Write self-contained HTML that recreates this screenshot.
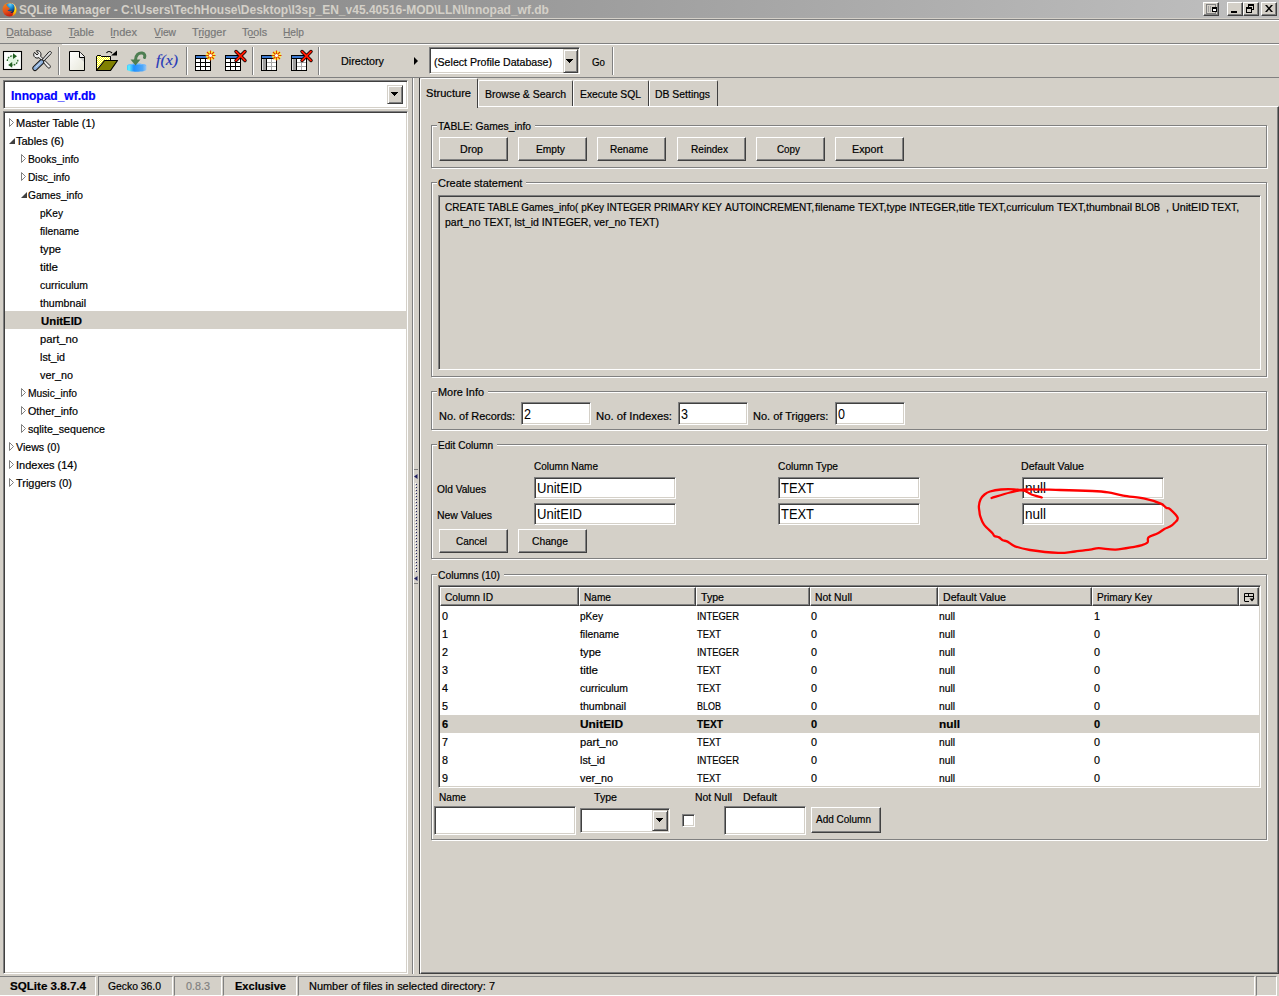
<!DOCTYPE html>
<html><head><meta charset="utf-8">
<style>
*{box-sizing:border-box;margin:0;padding:0}
html,body{width:1279px;height:996px;overflow:hidden;background:#d4d0c8;font-family:"Liberation Sans",sans-serif;font-size:11px;color:#000}
.a{position:absolute}
.t{position:absolute;white-space:pre;line-height:13px;-webkit-text-stroke:0.2px currentColor}
.u{text-decoration:underline}
svg{position:absolute;overflow:visible}
</style></head><body>
<div class="a" style="left:0px;top:0px;width:1279px;height:18px;background:linear-gradient(to right,#808080,#c0c0c0)"></div>
<div class="t" style="left:19px;top:3px;font-weight:bold;font-size:12px;line-height:14px;color:#d4d0c8;-webkit-text-stroke:0;">SQLite Manager - C:\Users\TechHouse\Desktop\I3sp_EN_v45.40516-MOD\LLN\Innopad_wf.db</div>
<svg style="left:1.5px;top:1.5px" width="15" height="15" viewBox="0 0 15 15">
<defs><radialGradient id="glb" cx="0.45" cy="0.1" r="0.9"><stop offset="0" stop-color="#70d8ff"/><stop offset="0.45" stop-color="#1a8ad0"/><stop offset="1" stop-color="#0a1850"/></radialGradient>
<linearGradient id="fox" x1="0" y1="0" x2="0.3" y2="1"><stop offset="0" stop-color="#f49020"/><stop offset="0.7" stop-color="#e04a18"/><stop offset="1" stop-color="#c82010"/></linearGradient>
<linearGradient id="yl" x1="0" y1="0" x2="0" y2="1"><stop offset="0" stop-color="#fff8d0"/><stop offset="0.6" stop-color="#ffd800"/><stop offset="1" stop-color="#f08010"/></linearGradient></defs>
<circle cx="7.5" cy="7.5" r="7" fill="url(#fox)"/>
<path d="M10 1.2 C13.5 2.5 15 6 14.3 9.5 C13.8 12 12 13.5 10 14 C12 11.5 12.5 6 10 1.2Z" fill="url(#yl)"/>
<path d="M4.5 2.2 C6.5 0.8 9.5 0.8 11.3 2.2 C12.8 3.5 13 7 12 9.2 C11 10.8 9.5 11.3 8 11 C9.5 10.2 10 9.8 9.8 9 C8.5 9.5 6.5 9.2 5.5 8.3 C6.8 8 7.6 7.3 7.8 6.3 C6.8 5.8 6.2 5.6 5.8 4.6 C5 4.2 4.6 3.5 4.5 2.2Z" fill="url(#glb)"/>
</svg>
<div class="a" style="left:0px;top:18px;width:1279px;height:1px;background:#d4d0c8"></div>
<div class="a" style="left:0px;top:19px;width:1279px;height:1px;background:#808080"></div>
<div class="a" style="left:0px;top:20px;width:1279px;height:1px;background:#fff"></div>
<div class="a" style="left:1203px;top:2px;width:16px;height:14px;background:#d4d0c8;border-top:1px solid #fff;border-left:1px solid #fff;border-right:1px solid #404040;border-bottom:1px solid #404040;box-shadow:inset -1px -1px 0 #808080"></div>
<div class="a" style="left:1227px;top:2px;width:16px;height:14px;background:#d4d0c8;border-top:1px solid #fff;border-left:1px solid #fff;border-right:1px solid #404040;border-bottom:1px solid #404040;box-shadow:inset -1px -1px 0 #808080"></div>
<div class="a" style="left:1243px;top:2px;width:16px;height:14px;background:#d4d0c8;border-top:1px solid #fff;border-left:1px solid #fff;border-right:1px solid #404040;border-bottom:1px solid #404040;box-shadow:inset -1px -1px 0 #808080"></div>
<div class="a" style="left:1261px;top:2px;width:16px;height:14px;background:#d4d0c8;border-top:1px solid #fff;border-left:1px solid #fff;border-right:1px solid #404040;border-bottom:1px solid #404040;box-shadow:inset -1px -1px 0 #808080"></div>
<div class="a" style="left:1206px;top:4px;width:10px;height:10px;border:1px solid #808080"></div>
<div class="a" style="left:1208px;top:6px;width:1px;height:6px;background:#a0a0a0"></div>
<div class="a" style="left:1210px;top:6px;width:1px;height:6px;background:#a0a0a0"></div>
<div class="a" style="left:1212px;top:7px;width:5px;height:5px;border:1px solid #000;border-top-width:2px;background:#fff"></div>
<div class="a" style="left:1231px;top:11px;width:6px;height:2px;background:#000"></div>
<div class="a" style="left:1248px;top:4px;width:6px;height:6px;border:1px solid #000;border-top-width:2px"></div>
<div class="a" style="left:1246px;top:7px;width:6px;height:6px;border:1px solid #000;border-top-width:2px;background:#d4d0c8"></div>
<svg style="left:1265px;top:5px" width="8" height="7" viewBox="0 0 8 7"><path d="M0 0h2l2 2.5l2-2.5h2l-3 3.5l3 3.5h-2l-2-2.5l-2 2.5h-2l3-3.5z" fill="#000"/></svg>
<div class="t" style="left:6px;top:26px;color:#787878;transform:scaleX(0.9768);transform-origin:0 0;">Database</div>
<div class="t" style="left:68px;top:26px;color:#787878;transform:scaleX(0.9887);transform-origin:0 0;">Table</div>
<div class="t" style="left:110px;top:26px;color:#787878;">Index</div>
<div class="t" style="left:154px;top:26px;color:#787878;transform:scaleX(0.9300);transform-origin:0 0;">View</div>
<div class="t" style="left:192px;top:26px;color:#787878;transform:scaleX(0.9873);transform-origin:0 0;">Trigger</div>
<div class="t" style="left:242px;top:26px;color:#787878;transform:scaleX(0.9732);transform-origin:0 0;">Tools</div>
<div class="t" style="left:283px;top:26px;color:#787878;transform:scaleX(0.9282);transform-origin:0 0;">Help</div>
<div class="a" style="left:7px;top:37px;width:7px;height:1px;background:#787878"></div>
<div class="a" style="left:69px;top:37px;width:6px;height:1px;background:#787878"></div>
<div class="a" style="left:111px;top:37px;width:4px;height:1px;background:#787878"></div>
<div class="a" style="left:155px;top:37px;width:6px;height:1px;background:#787878"></div>
<div class="a" style="left:199px;top:37px;width:4px;height:1px;background:#787878"></div>
<div class="a" style="left:249px;top:37px;width:6px;height:1px;background:#787878"></div>
<div class="a" style="left:284px;top:37px;width:7px;height:1px;background:#787878"></div>
<div class="a" style="left:0px;top:43px;width:1279px;height:1px;background:#808080"></div>
<div class="a" style="left:62px;top:44px;width:1217px;height:1px;background:#fff"></div>
<div class="a" style="left:0px;top:77px;width:1279px;height:1px;background:#808080"></div>
<div class="a" style="left:58px;top:47px;width:1px;height:28px;background:#808080"></div>
<div class="a" style="left:59px;top:47px;width:1px;height:28px;background:#fff"></div>
<div class="a" style="left:186px;top:47px;width:1px;height:28px;background:#808080"></div>
<div class="a" style="left:187px;top:47px;width:1px;height:28px;background:#fff"></div>
<div class="a" style="left:252px;top:47px;width:1px;height:28px;background:#808080"></div>
<div class="a" style="left:253px;top:47px;width:1px;height:28px;background:#fff"></div>
<div class="a" style="left:318px;top:47px;width:1px;height:28px;background:#808080"></div>
<div class="a" style="left:319px;top:47px;width:1px;height:28px;background:#fff"></div>
<div class="a" style="left:612px;top:47px;width:1px;height:28px;background:#808080"></div>
<div class="a" style="left:613px;top:47px;width:1px;height:28px;background:#fff"></div>
<div class="t" style="left:341px;top:55px;transform:scaleX(0.9769);transform-origin:0 0;">Directory</div>
<svg style="left:3px;top:51px" width="19" height="19" viewBox="0 0 19 19">
<rect x="0.5" y="0.5" width="18" height="18" fill="#fbfdfb" stroke="#000" stroke-width="1.1"/>
<ellipse cx="9.5" cy="9.5" rx="4.5" ry="4" fill="#dff5df"/>
<path d="M4.3 10 A5.3 5 0 0 1 10.5 5" fill="none" stroke="#2a6a2a" stroke-width="1.3" stroke-dasharray="1.8 0.9"/>
<path d="M14.8 8.8 A5.3 5 0 0 1 8.5 14" fill="none" stroke="#2a6a2a" stroke-width="1.3" stroke-dasharray="1.8 0.9"/>
<path d="M10 2.3 L14 5.2 L10 8.1 Z" fill="#1f5f1f"/>
<path d="M9.2 11 L5.2 13.9 L9.2 16.8 Z" fill="#1f5f1f"/>
</svg>
<svg style="left:31px;top:49px" width="22" height="23" viewBox="0 0 22 23">
<path d="M3.6 3.2 C2.2 4.8 2.4 7.2 4 8.4 C5.3 9.3 6.8 9.2 8 8.6 L16.8 18.6 C17.6 19.4 18.9 19.2 19.3 18.2 C19.6 17.5 19.2 16.8 18.6 16.2 L9.6 7.2 C10.3 5.7 10.1 3.6 8.6 2.4 C7.6 1.6 6.3 1.4 5.4 1.8 L7.4 4.4 L6 6 L3.8 3.6 Z" fill="#ececec" stroke="#1a1a1a" stroke-width="1"/>
<path d="M20.3 3.2 C19.6 2.2 18.5 2.3 17.8 3 L11 10.8 L12.6 12.3 L19.6 5.1 C20.3 4.5 20.8 3.9 20.3 3.2 Z" fill="#dcdcdc" stroke="#1a1a1a" stroke-width="1"/>
<path d="M4 19.3 L10.5 13" stroke="#1a1a1a" stroke-width="5.4" stroke-linecap="round"/>
<path d="M4 19.3 L10.5 13" stroke="#8cb0dc" stroke-width="3.4" stroke-linecap="round"/>
<path d="M4.6 18.4 L9.6 13.6" stroke="#c8daf0" stroke-width="1"/>
</svg>
<svg style="left:69px;top:51px" width="16" height="20" viewBox="0 0 16 20">
<defs><linearGradient id="gd" x1="0" y1="0" x2="1" y2="1"><stop offset="0" stop-color="#ffffff"/><stop offset="1" stop-color="#e6e6d8"/></linearGradient></defs>
<path d="M0.5 0.5 L10.5 0.5 L15.5 5.5 L15.5 19.5 L0.5 19.5 Z" fill="url(#gd)" stroke="#000" stroke-width="1"/>
<path d="M10.5 0.5 L10.5 6.5 L15.5 6.5" fill="#f0f0f0" stroke="#000" stroke-width="1"/>
<path d="M11 7 L15 7 L15 11 Z" fill="#b8b8b8" opacity="0.6"/>
</svg>
<svg style="left:96px;top:50px" width="23" height="22" viewBox="0 0 23 22">
<defs><pattern id="ck" width="2" height="2" patternUnits="userSpaceOnUse"><rect width="2" height="2" fill="#ffff00"/><rect width="1" height="1" fill="#fff"/><rect x="1" y="1" width="1" height="1" fill="#fff"/></pattern></defs>
<path d="M0.5 20.5 L0.5 6.5 L1.5 5.5 L4.5 5.5 L5.5 6.5 L14.5 6.5 L14.5 10.5" fill="url(#ck)" stroke="#000" stroke-width="1"/>
<path d="M0.5 20.5 L0.5 6.5 L14.5 6.5 L14.5 10.5 L8 10.5 Z" fill="url(#ck)"/>
<path d="M0.5 6.5 L1.5 5.5 L4.5 5.5 L5.5 6.5 L14.5 6.5 L14.5 10.5" fill="none" stroke="#000" stroke-width="1"/>
<path d="M0.5 20.5 L0.5 6.5" stroke="#000" stroke-width="1"/>
<path d="M0.5 20.5 L8.5 10.5 L21.5 10.5 L14.5 20.5 Z" fill="#808000" stroke="#000" stroke-width="1.2" stroke-linejoin="round"/>
<path d="M10.5 3 C12 0.8 14 1.2 16 3" fill="none" stroke="#000" stroke-width="1.2"/>
<path d="M15 5.5 L21 0.5 L21 5.5 Z" fill="#000"/>
</svg>
<svg style="left:126px;top:50px" width="22" height="23" viewBox="0 0 22 23">
<defs><linearGradient id="bd" x1="0" y1="0" x2="1" y2="0"><stop offset="0" stop-color="#30d0ff"/><stop offset="0.1" stop-color="#60f0ff"/><stop offset="0.35" stop-color="#2090ff"/><stop offset="0.8" stop-color="#50a8f8"/><stop offset="1" stop-color="#a0c8f0"/></linearGradient></defs>
<path d="M1 15.5 C1 13 20.5 13 20.5 15.5 L20.5 19.5 C20.5 22.5 1 22.5 1 19.5 Z" fill="url(#bd)"/>
<path d="M1.5 15.5 C3 13.8 18 13.8 20 15.5" fill="none" stroke="#70b8ff" stroke-width="1"/>
<path d="M9.5 10 C9.5 5 13 2.5 16 3 C18.5 3.5 19.5 5.5 18.5 7.5" fill="none" stroke="#4e7e52" stroke-width="3" stroke-linecap="round"/>
<path d="M4.5 9.5 L14.5 9.5 L9.5 15.5 Z" fill="#4e7e52"/>
</svg>
<div class="t" style="left:156px;top:52px;font-family:'Liberation Serif',serif;font-style:italic;font-size:15px;line-height:17px;color:#2336b8;-webkit-text-stroke:0.15px currentColor;transform:scaleX(1.0563);transform-origin:0 0;">f(x)</div>
<svg style="left:195px;top:55px" width="16" height="16" viewBox="0 0 16 16"><rect x="0" y="0" width="16" height="16" fill="#000"/><rect x="1" y="1" width="14" height="2" fill="#3a78d0"/><rect x="1" y="4" width="4" height="3" fill="#fff"/><rect x="6" y="4" width="4" height="3" fill="#fff"/><rect x="11" y="4" width="4" height="3" fill="#fff"/><rect x="1" y="8" width="4" height="3" fill="#fff"/><rect x="6" y="8" width="4" height="3" fill="#fff"/><rect x="11" y="8" width="4" height="3" fill="#fff"/><rect x="1" y="12" width="4" height="3" fill="#fff"/><rect x="6" y="12" width="4" height="3" fill="#fff"/><rect x="11" y="12" width="4" height="3" fill="#fff"/><g transform="translate(15.5,0.5)"><circle r="4.5" fill="#ffff30" opacity="0.9"/><path d="M0 -5 L0 5 M-5 0 L5 0 M-3.5 -3.5 L3.5 3.5 M-3.5 3.5 L3.5 -3.5" stroke="#e04000" stroke-width="1.2"/><circle r="1.6" fill="#fff"/></g></svg>
<svg style="left:225px;top:55px" width="16" height="16" viewBox="0 0 16 16"><rect x="0" y="0" width="16" height="16" fill="#000"/><rect x="1" y="1" width="14" height="2" fill="#3a78d0"/><rect x="1" y="4" width="4" height="3" fill="#fff"/><rect x="6" y="4" width="4" height="3" fill="#fff"/><rect x="11" y="4" width="4" height="3" fill="#fff"/><rect x="1" y="8" width="4" height="3" fill="#fff"/><rect x="6" y="8" width="4" height="3" fill="#fff"/><rect x="11" y="8" width="4" height="3" fill="#fff"/><rect x="1" y="12" width="4" height="3" fill="#fff"/><rect x="6" y="12" width="4" height="3" fill="#fff"/><rect x="11" y="12" width="4" height="3" fill="#fff"/><g transform="translate(15.5,1)"><path d="M-4.5 -4.5 L4.5 4.5 M-4.5 4.5 L4.5 -4.5" stroke="#000" stroke-width="3.4" stroke-linecap="round"/><path d="M-4.5 -4.5 L4.5 4.5 M-4.5 4.5 L4.5 -4.5" stroke="#ff1800" stroke-width="1.8" stroke-linecap="round"/></g></svg>
<svg style="left:261px;top:55px" width="16" height="16" viewBox="0 0 16 16"><rect x="0" y="0" width="16" height="16" fill="#000"/><rect x="1" y="1" width="14" height="2" fill="#3a78d0"/><rect x="6" y="4" width="4" height="3" fill="#fff"/><rect x="11" y="4" width="4" height="3" fill="#fff"/><rect x="6" y="8" width="4" height="3" fill="#fff"/><rect x="11" y="8" width="4" height="3" fill="#fff"/><rect x="6" y="12" width="4" height="3" fill="#fff"/><rect x="11" y="12" width="4" height="3" fill="#fff"/><rect x="1" y="4" width="4" height="11" fill="#a0a0a0"/><rect x="1" y="4" width="1" height="11" fill="#e0e0e0"/><rect x="6" y="4" width="9" height="11" fill="#fff"/><rect x="6" y="7" width="9" height="1" fill="#a8a8a8"/><rect x="6" y="11" width="9" height="1" fill="#a8a8a8"/><rect x="10" y="4" width="1" height="11" fill="#a8a8a8"/><g transform="translate(15.5,0.5)"><circle r="4.5" fill="#ffff30" opacity="0.9"/><path d="M0 -5 L0 5 M-5 0 L5 0 M-3.5 -3.5 L3.5 3.5 M-3.5 3.5 L3.5 -3.5" stroke="#e04000" stroke-width="1.2"/><circle r="1.6" fill="#fff"/></g></svg>
<svg style="left:291px;top:55px" width="16" height="16" viewBox="0 0 16 16"><rect x="0" y="0" width="16" height="16" fill="#000"/><rect x="1" y="1" width="14" height="2" fill="#3a78d0"/><rect x="6" y="4" width="4" height="3" fill="#fff"/><rect x="11" y="4" width="4" height="3" fill="#fff"/><rect x="6" y="8" width="4" height="3" fill="#fff"/><rect x="11" y="8" width="4" height="3" fill="#fff"/><rect x="6" y="12" width="4" height="3" fill="#fff"/><rect x="11" y="12" width="4" height="3" fill="#fff"/><rect x="1" y="4" width="4" height="11" fill="#a0a0a0"/><rect x="1" y="4" width="1" height="11" fill="#e0e0e0"/><rect x="6" y="4" width="9" height="11" fill="#fff"/><rect x="6" y="7" width="9" height="1" fill="#a8a8a8"/><rect x="6" y="11" width="9" height="1" fill="#a8a8a8"/><rect x="10" y="4" width="1" height="11" fill="#a8a8a8"/><g transform="translate(15.5,1)"><path d="M-4.5 -4.5 L4.5 4.5 M-4.5 4.5 L4.5 -4.5" stroke="#000" stroke-width="3.4" stroke-linecap="round"/><path d="M-4.5 -4.5 L4.5 4.5 M-4.5 4.5 L4.5 -4.5" stroke="#ff1800" stroke-width="1.8" stroke-linecap="round"/></g></svg>
<div class="a" style="left:414px;top:57px;width:0;height:0;border-top:4px solid transparent;border-bottom:4px solid transparent;border-left:4px solid #000"></div>
<div class="a" style="left:429px;top:47px;width:151px;height:27px;background:#fff;border-top:1px solid #808080;border-left:1px solid #808080;border-right:1px solid #fff;border-bottom:1px solid #fff;box-shadow:inset 1px 1px 0 #404040,inset -1px -1px 0 #d4d0c8"></div>
<div class="a" style="left:563px;top:49px;width:15px;height:24px;background:#d4d0c8;border-top:1px solid #d4d0c8;border-left:1px solid #d4d0c8;border-right:1px solid #404040;border-bottom:1px solid #404040;box-shadow:inset 1px 1px 0 #fff,inset -1px -1px 0 #808080"></div>
<div class="a" style="left:566px;top:59px;width:7px;height:1px;background:#000"></div>
<div class="a" style="left:567px;top:60px;width:5px;height:1px;background:#000"></div>
<div class="a" style="left:568px;top:61px;width:3px;height:1px;background:#000"></div>
<div class="a" style="left:569px;top:62px;width:1px;height:1px;background:#000"></div>
<div class="t" style="left:434px;top:56px;transform:scaleX(0.9650);transform-origin:0 0;">(Select Profile Database)</div>
<div class="t" style="left:592px;top:56px;transform:scaleX(0.8851);transform-origin:0 0;">Go</div>
<div class="a" style="left:3px;top:80px;width:405px;height:29px;background:#fff;border-top:1px solid #808080;border-left:1px solid #808080;border-right:1px solid #fff;border-bottom:1px solid #fff;box-shadow:inset 1px 1px 0 #404040,inset -1px -1px 0 #d4d0c8"></div>
<div class="t" style="left:11px;top:89px;font-weight:bold;font-size:12px;line-height:14px;color:#0000ff;">Innopad_wf.db</div>
<div class="a" style="left:387px;top:85px;width:16px;height:19px;background:#d4d0c8;border-top:1px solid #d4d0c8;border-left:1px solid #d4d0c8;border-right:1px solid #404040;border-bottom:1px solid #404040;box-shadow:inset 1px 1px 0 #fff,inset -1px -1px 0 #808080"></div>
<div class="a" style="left:391px;top:92px;width:7px;height:1px;background:#000"></div>
<div class="a" style="left:392px;top:93px;width:5px;height:1px;background:#000"></div>
<div class="a" style="left:393px;top:94px;width:3px;height:1px;background:#000"></div>
<div class="a" style="left:394px;top:95px;width:1px;height:1px;background:#000"></div>
<div class="a" style="left:3px;top:111px;width:405px;height:863px;background:#fff;border-top:1px solid #808080;border-left:1px solid #808080;border-right:1px solid #fff;border-bottom:1px solid #fff;box-shadow:inset 1px 1px 0 #404040,inset -1px -1px 0 #d4d0c8"></div>
<svg style="left:9px;top:118px" width="6" height="9"><path d="M0.5 0.5 L4.5 4.5 L0.5 8.5 Z" fill="#fff" stroke="#808080" stroke-width="1"/></svg>
<div class="t" style="left:16px;top:117px;">Master Table (1)</div>
<svg style="left:9px;top:138px" width="7" height="7"><path d="M6 0 L6 6 L0 6 Z" fill="#404040"/></svg>
<div class="t" style="left:16px;top:135px;transform:scaleX(0.9939);transform-origin:0 0;">Tables (6)</div>
<svg style="left:21px;top:154px" width="6" height="9"><path d="M0.5 0.5 L4.5 4.5 L0.5 8.5 Z" fill="#fff" stroke="#808080" stroke-width="1"/></svg>
<div class="t" style="left:28px;top:153px;transform:scaleX(0.9369);transform-origin:0 0;">Books_info</div>
<svg style="left:21px;top:172px" width="6" height="9"><path d="M0.5 0.5 L4.5 4.5 L0.5 8.5 Z" fill="#fff" stroke="#808080" stroke-width="1"/></svg>
<div class="t" style="left:28px;top:171px;transform:scaleX(0.9282);transform-origin:0 0;">Disc_info</div>
<svg style="left:21px;top:192px" width="7" height="7"><path d="M6 0 L6 6 L0 6 Z" fill="#404040"/></svg>
<div class="t" style="left:28px;top:189px;transform:scaleX(0.9273);transform-origin:0 0;">Games_info</div>
<div class="t" style="left:40px;top:207px;transform:scaleX(0.9171);transform-origin:0 0;">pKey</div>
<div class="t" style="left:40px;top:225px;transform:scaleX(0.9380);transform-origin:0 0;">filename</div>
<div class="t" style="left:40px;top:243px;transform:scaleX(1.0098);transform-origin:0 0;">type</div>
<div class="t" style="left:40px;top:261px;transform:scaleX(1.0511);transform-origin:0 0;">title</div>
<div class="t" style="left:40px;top:279px;transform:scaleX(0.9461);transform-origin:0 0;">curriculum</div>
<div class="t" style="left:40px;top:297px;transform:scaleX(0.9643);transform-origin:0 0;">thumbnail</div>
<div class="a" style="left:5px;top:311px;width:401px;height:18px;background:#d4d0c8"></div>
<div class="t" style="left:41px;top:315px;font-weight:bold;transform:scaleX(1.0319);transform-origin:0 0;">UnitEID</div>
<div class="t" style="left:40px;top:333px;transform:scaleX(1.0184);transform-origin:0 0;">part_no</div>
<div class="t" style="left:40px;top:351px;transform:scaleX(0.9732);transform-origin:0 0;">lst_id</div>
<div class="t" style="left:40px;top:369px;transform:scaleX(0.9810);transform-origin:0 0;">ver_no</div>
<svg style="left:21px;top:388px" width="6" height="9"><path d="M0.5 0.5 L4.5 4.5 L0.5 8.5 Z" fill="#fff" stroke="#808080" stroke-width="1"/></svg>
<div class="t" style="left:28px;top:387px;transform:scaleX(0.9319);transform-origin:0 0;">Music_info</div>
<svg style="left:21px;top:406px" width="6" height="9"><path d="M0.5 0.5 L4.5 4.5 L0.5 8.5 Z" fill="#fff" stroke="#808080" stroke-width="1"/></svg>
<div class="t" style="left:28px;top:405px;transform:scaleX(0.9732);transform-origin:0 0;">Other_info</div>
<svg style="left:21px;top:424px" width="6" height="9"><path d="M0.5 0.5 L4.5 4.5 L0.5 8.5 Z" fill="#fff" stroke="#808080" stroke-width="1"/></svg>
<div class="t" style="left:28px;top:423px;transform:scaleX(0.9684);transform-origin:0 0;">sqlite_sequence</div>
<svg style="left:9px;top:442px" width="6" height="9"><path d="M0.5 0.5 L4.5 4.5 L0.5 8.5 Z" fill="#fff" stroke="#808080" stroke-width="1"/></svg>
<div class="t" style="left:16px;top:441px;transform:scaleX(0.9637);transform-origin:0 0;">Views (0)</div>
<svg style="left:9px;top:460px" width="6" height="9"><path d="M0.5 0.5 L4.5 4.5 L0.5 8.5 Z" fill="#fff" stroke="#808080" stroke-width="1"/></svg>
<div class="t" style="left:16px;top:459px;">Indexes (14)</div>
<svg style="left:9px;top:478px" width="6" height="9"><path d="M0.5 0.5 L4.5 4.5 L0.5 8.5 Z" fill="#fff" stroke="#808080" stroke-width="1"/></svg>
<div class="t" style="left:16px;top:477px;transform:scaleX(0.9922);transform-origin:0 0;">Triggers (0)</div>
<div class="a" style="left:412px;top:78px;width:1px;height:896px;background:#808080"></div>
<div class="a" style="left:413px;top:78px;width:1px;height:896px;background:#fff"></div>
<div class="a" style="left:419px;top:78px;width:1px;height:896px;background:#404040"></div>
<div class="a" style="left:414px;top:469px;width:4px;height:1px;background:#808080"></div>
<div class="a" style="left:414px;top:583px;width:4px;height:1px;background:#808080"></div>
<svg style="left:414px;top:474px" width="4" height="5" viewBox="0 0 4 5"><path d="M0 2.5L3.5 0V5Z" fill="#202060"/></svg>
<svg style="left:414px;top:576px" width="4" height="5" viewBox="0 0 4 5"><path d="M0 2.5L3.5 0V5Z" fill="#202060"/></svg>
<div class="a" style="left:416px;top:484px;width:1px;height:1px;background:#202060"></div>
<div class="a" style="left:415px;top:483px;width:1px;height:1px;background:#fff"></div>
<div class="a" style="left:416px;top:487px;width:1px;height:1px;background:#202060"></div>
<div class="a" style="left:415px;top:486px;width:1px;height:1px;background:#fff"></div>
<div class="a" style="left:416px;top:490px;width:1px;height:1px;background:#202060"></div>
<div class="a" style="left:415px;top:489px;width:1px;height:1px;background:#fff"></div>
<div class="a" style="left:416px;top:493px;width:1px;height:1px;background:#202060"></div>
<div class="a" style="left:415px;top:492px;width:1px;height:1px;background:#fff"></div>
<div class="a" style="left:416px;top:496px;width:1px;height:1px;background:#202060"></div>
<div class="a" style="left:415px;top:495px;width:1px;height:1px;background:#fff"></div>
<div class="a" style="left:416px;top:499px;width:1px;height:1px;background:#202060"></div>
<div class="a" style="left:415px;top:498px;width:1px;height:1px;background:#fff"></div>
<div class="a" style="left:416px;top:502px;width:1px;height:1px;background:#202060"></div>
<div class="a" style="left:415px;top:501px;width:1px;height:1px;background:#fff"></div>
<div class="a" style="left:416px;top:505px;width:1px;height:1px;background:#202060"></div>
<div class="a" style="left:415px;top:504px;width:1px;height:1px;background:#fff"></div>
<div class="a" style="left:416px;top:508px;width:1px;height:1px;background:#202060"></div>
<div class="a" style="left:415px;top:507px;width:1px;height:1px;background:#fff"></div>
<div class="a" style="left:416px;top:511px;width:1px;height:1px;background:#202060"></div>
<div class="a" style="left:415px;top:510px;width:1px;height:1px;background:#fff"></div>
<div class="a" style="left:416px;top:514px;width:1px;height:1px;background:#202060"></div>
<div class="a" style="left:415px;top:513px;width:1px;height:1px;background:#fff"></div>
<div class="a" style="left:416px;top:517px;width:1px;height:1px;background:#202060"></div>
<div class="a" style="left:415px;top:516px;width:1px;height:1px;background:#fff"></div>
<div class="a" style="left:416px;top:520px;width:1px;height:1px;background:#202060"></div>
<div class="a" style="left:415px;top:519px;width:1px;height:1px;background:#fff"></div>
<div class="a" style="left:416px;top:523px;width:1px;height:1px;background:#202060"></div>
<div class="a" style="left:415px;top:522px;width:1px;height:1px;background:#fff"></div>
<div class="a" style="left:416px;top:526px;width:1px;height:1px;background:#202060"></div>
<div class="a" style="left:415px;top:525px;width:1px;height:1px;background:#fff"></div>
<div class="a" style="left:416px;top:529px;width:1px;height:1px;background:#202060"></div>
<div class="a" style="left:415px;top:528px;width:1px;height:1px;background:#fff"></div>
<div class="a" style="left:416px;top:532px;width:1px;height:1px;background:#202060"></div>
<div class="a" style="left:415px;top:531px;width:1px;height:1px;background:#fff"></div>
<div class="a" style="left:416px;top:535px;width:1px;height:1px;background:#202060"></div>
<div class="a" style="left:415px;top:534px;width:1px;height:1px;background:#fff"></div>
<div class="a" style="left:416px;top:538px;width:1px;height:1px;background:#202060"></div>
<div class="a" style="left:415px;top:537px;width:1px;height:1px;background:#fff"></div>
<div class="a" style="left:416px;top:541px;width:1px;height:1px;background:#202060"></div>
<div class="a" style="left:415px;top:540px;width:1px;height:1px;background:#fff"></div>
<div class="a" style="left:416px;top:544px;width:1px;height:1px;background:#202060"></div>
<div class="a" style="left:415px;top:543px;width:1px;height:1px;background:#fff"></div>
<div class="a" style="left:416px;top:547px;width:1px;height:1px;background:#202060"></div>
<div class="a" style="left:415px;top:546px;width:1px;height:1px;background:#fff"></div>
<div class="a" style="left:416px;top:550px;width:1px;height:1px;background:#202060"></div>
<div class="a" style="left:415px;top:549px;width:1px;height:1px;background:#fff"></div>
<div class="a" style="left:416px;top:553px;width:1px;height:1px;background:#202060"></div>
<div class="a" style="left:415px;top:552px;width:1px;height:1px;background:#fff"></div>
<div class="a" style="left:416px;top:556px;width:1px;height:1px;background:#202060"></div>
<div class="a" style="left:415px;top:555px;width:1px;height:1px;background:#fff"></div>
<div class="a" style="left:416px;top:559px;width:1px;height:1px;background:#202060"></div>
<div class="a" style="left:415px;top:558px;width:1px;height:1px;background:#fff"></div>
<div class="a" style="left:416px;top:562px;width:1px;height:1px;background:#202060"></div>
<div class="a" style="left:415px;top:561px;width:1px;height:1px;background:#fff"></div>
<div class="a" style="left:416px;top:565px;width:1px;height:1px;background:#202060"></div>
<div class="a" style="left:415px;top:564px;width:1px;height:1px;background:#fff"></div>
<div class="a" style="left:416px;top:568px;width:1px;height:1px;background:#202060"></div>
<div class="a" style="left:415px;top:567px;width:1px;height:1px;background:#fff"></div>
<div class="a" style="left:416px;top:571px;width:1px;height:1px;background:#202060"></div>
<div class="a" style="left:415px;top:570px;width:1px;height:1px;background:#fff"></div>
<div class="a" style="left:420px;top:106px;width:859px;height:868px;border-top:1px solid #fff;border-left:1px solid #fff;border-right:1px solid #404040;border-bottom:1px solid #404040;box-shadow:inset -1px -1px 0 #808080"></div>
<div class="a" style="left:478px;top:80px;width:95px;height:26px;background:#d4d0c8;border-top:1px solid #fff;border-left:1px solid #fff;border-right:1px solid #404040;border-top-left-radius:2px;border-top-right-radius:2px"></div>
<div class="t" style="left:485px;top:88px;transform:scaleX(0.9531);transform-origin:0 0;">Browse &amp; Search</div>
<div class="a" style="left:573px;top:80px;width:76px;height:26px;background:#d4d0c8;border-top:1px solid #fff;border-left:1px solid #fff;border-right:1px solid #404040;border-top-left-radius:2px;border-top-right-radius:2px"></div>
<div class="t" style="left:580px;top:88px;transform:scaleX(0.9409);transform-origin:0 0;">Execute SQL</div>
<div class="a" style="left:649px;top:80px;width:69px;height:26px;background:#d4d0c8;border-top:1px solid #fff;border-left:1px solid #fff;border-right:1px solid #404040;border-top-left-radius:2px;border-top-right-radius:2px"></div>
<div class="t" style="left:655px;top:88px;transform:scaleX(0.9467);transform-origin:0 0;">DB Settings</div>
<div class="a" style="left:420px;top:78px;width:58px;height:30px;background:#d4d0c8;border-top:1px solid #fff;border-left:1px solid #fff;border-right:1px solid #404040;border-top-left-radius:2px;border-top-right-radius:2px"></div>
<div class="t" style="left:426px;top:87px;transform:scaleX(1.0081);transform-origin:0 0;">Structure</div>
<div class="a" style="left:431px;top:125px;width:836px;height:43px;border:1px solid #808080;box-shadow:inset 1px 1px 0 #fff,1px 1px 0 #fff"></div>
<div class="a" style="left:437px;top:125px;width:98px;height:2px;background:#d4d0c8"></div>
<div class="t" style="left:438px;top:120px;transform:scaleX(0.9351);transform-origin:0 0;">TABLE: Games_info</div>
<div class="a" style="left:439px;top:137px;width:69px;height:24px;background:#d4d0c8;border-top:1px solid #fff;border-left:1px solid #fff;border-right:1px solid #404040;border-bottom:1px solid #404040;box-shadow:inset -1px -1px 0 #808080"></div>
<div class="t" style="left:460px;top:143px;transform:scaleX(0.9646);transform-origin:0 0;">Drop</div>
<div class="a" style="left:518px;top:137px;width:69px;height:24px;background:#d4d0c8;border-top:1px solid #fff;border-left:1px solid #fff;border-right:1px solid #404040;border-bottom:1px solid #404040;box-shadow:inset -1px -1px 0 #808080"></div>
<div class="t" style="left:536px;top:143px;transform:scaleX(0.9299);transform-origin:0 0;">Empty</div>
<div class="a" style="left:597px;top:137px;width:69px;height:24px;background:#d4d0c8;border-top:1px solid #fff;border-left:1px solid #fff;border-right:1px solid #404040;border-bottom:1px solid #404040;box-shadow:inset -1px -1px 0 #808080"></div>
<div class="t" style="left:610px;top:143px;transform:scaleX(0.9139);transform-origin:0 0;">Rename</div>
<div class="a" style="left:677px;top:137px;width:69px;height:24px;background:#d4d0c8;border-top:1px solid #fff;border-left:1px solid #fff;border-right:1px solid #404040;border-bottom:1px solid #404040;box-shadow:inset -1px -1px 0 #808080"></div>
<div class="t" style="left:691px;top:143px;transform:scaleX(0.9168);transform-origin:0 0;">Reindex</div>
<div class="a" style="left:756px;top:137px;width:69px;height:24px;background:#d4d0c8;border-top:1px solid #fff;border-left:1px solid #fff;border-right:1px solid #404040;border-bottom:1px solid #404040;box-shadow:inset -1px -1px 0 #808080"></div>
<div class="t" style="left:777px;top:143px;transform:scaleX(0.8954);transform-origin:0 0;">Copy</div>
<div class="a" style="left:835px;top:137px;width:69px;height:24px;background:#d4d0c8;border-top:1px solid #fff;border-left:1px solid #fff;border-right:1px solid #404040;border-bottom:1px solid #404040;box-shadow:inset -1px -1px 0 #808080"></div>
<div class="t" style="left:852px;top:143px;transform:scaleX(0.9749);transform-origin:0 0;">Export</div>
<div class="a" style="left:431px;top:182px;width:836px;height:195px;border:1px solid #808080;box-shadow:inset 1px 1px 0 #fff,1px 1px 0 #fff"></div>
<div class="a" style="left:437px;top:182px;width:89px;height:2px;background:#d4d0c8"></div>
<div class="t" style="left:438px;top:177px;">Create statement</div>
<div class="a" style="left:438px;top:195px;width:823px;height:175px;background:#d4d0c8;border-top:1px solid #808080;border-left:1px solid #808080;border-right:1px solid #fff;border-bottom:1px solid #fff;box-shadow:inset 1px 1px 0 #404040,inset -1px -1px 0 #d4d0c8"></div>
<div class="t" style="left:445px;top:201px;transform:scaleX(0.9093);transform-origin:0 0;">CREATE TABLE Games_info( pKey INTEGER PRIMARY KEY</div>
<div class="t" style="left:725px;top:201px;transform:scaleX(0.9119);transform-origin:0 0;">AUTOINCREMENT,</div>
<div class="t" style="left:815px;top:201px;transform:scaleX(0.9620);transform-origin:0 0;">filename</div>
<div class="t" style="left:857.5px;top:201px;transform:scaleX(0.9522);transform-origin:0 0;">TEXT,type INTEGER,title</div>
<div class="t" style="left:977.5px;top:201px;transform:scaleX(0.9419);transform-origin:0 0;">TEXT,curriculum</div>
<div class="t" style="left:1056.5px;top:201px;transform:scaleX(0.9658);transform-origin:0 0;">TEXT,thumbnail</div>
<div class="t" style="left:1134.5px;top:201px;transform:scaleX(0.8515);transform-origin:0 0;">BLOB</div>
<div class="t" style="left:1165.5px;top:201px;transform:scaleX(0.9769);transform-origin:0 0;">, UnitEID</div>
<div class="t" style="left:1211.3px;top:201px;transform:scaleX(0.9348);transform-origin:0 0;">TEXT,</div>
<div class="t" style="left:445px;top:216px;transform:scaleX(0.9503);transform-origin:0 0;">part_no TEXT, lst_id INTEGER, ver_no TEXT)</div>
<div class="a" style="left:431px;top:391px;width:836px;height:39px;border:1px solid #808080;box-shadow:inset 1px 1px 0 #fff,1px 1px 0 #fff"></div>
<div class="a" style="left:437px;top:391px;width:51px;height:2px;background:#d4d0c8"></div>
<div class="t" style="left:438px;top:386px;transform:scaleX(0.9899);transform-origin:0 0;">More Info</div>
<div class="t" style="left:439px;top:410px;transform:scaleX(0.9945);transform-origin:0 0;">No. of Records:</div>
<div class="a" style="left:521px;top:402px;width:70px;height:23px;background:#fff;border-top:1px solid #808080;border-left:1px solid #808080;border-right:1px solid #fff;border-bottom:1px solid #fff;box-shadow:inset 1px 1px 0 #404040,inset -1px -1px 0 #d4d0c8"></div>
<div class="t" style="left:524px;top:406px;font-size:14px;line-height:16px;-webkit-text-stroke:0;transform:scaleX(0.8978);transform-origin:0 0;">2</div>
<div class="t" style="left:596px;top:410px;transform:scaleX(1.0270);transform-origin:0 0;">No. of Indexes:</div>
<div class="a" style="left:678px;top:402px;width:70px;height:23px;background:#fff;border-top:1px solid #808080;border-left:1px solid #808080;border-right:1px solid #fff;border-bottom:1px solid #fff;box-shadow:inset 1px 1px 0 #404040,inset -1px -1px 0 #d4d0c8"></div>
<div class="t" style="left:681px;top:406px;font-size:14px;line-height:16px;-webkit-text-stroke:0;transform:scaleX(0.8978);transform-origin:0 0;">3</div>
<div class="t" style="left:753px;top:410px;">No. of Triggers:</div>
<div class="a" style="left:835px;top:402px;width:70px;height:23px;background:#fff;border-top:1px solid #808080;border-left:1px solid #808080;border-right:1px solid #fff;border-bottom:1px solid #fff;box-shadow:inset 1px 1px 0 #404040,inset -1px -1px 0 #d4d0c8"></div>
<div class="t" style="left:838px;top:406px;font-size:14px;line-height:16px;-webkit-text-stroke:0;transform:scaleX(0.8978);transform-origin:0 0;">0</div>
<div class="a" style="left:431px;top:444px;width:836px;height:115px;border:1px solid #808080;box-shadow:inset 1px 1px 0 #fff,1px 1px 0 #fff"></div>
<div class="a" style="left:437px;top:444px;width:60px;height:2px;background:#d4d0c8"></div>
<div class="t" style="left:438px;top:439px;transform:scaleX(0.9179);transform-origin:0 0;">Edit Column</div>
<div class="t" style="left:534px;top:460px;transform:scaleX(0.9102);transform-origin:0 0;">Column Name</div>
<div class="t" style="left:778px;top:460px;transform:scaleX(0.9287);transform-origin:0 0;">Column Type</div>
<div class="t" style="left:1021px;top:460px;transform:scaleX(0.9657);transform-origin:0 0;">Default Value</div>
<div class="t" style="left:437px;top:483px;transform:scaleX(0.9245);transform-origin:0 0;">Old Values</div>
<div class="t" style="left:437px;top:509px;transform:scaleX(0.9501);transform-origin:0 0;">New Values</div>
<div class="a" style="left:534px;top:477px;width:142px;height:22px;background:#fff;border-top:1px solid #808080;border-left:1px solid #808080;border-right:1px solid #fff;border-bottom:1px solid #fff;box-shadow:inset 1px 1px 0 #404040,inset -1px -1px 0 #d4d0c8"></div>
<div class="t" style="left:537px;top:480px;font-size:14px;line-height:16px;-webkit-text-stroke:0;transform:scaleX(0.9329);transform-origin:0 0;">UnitEID</div>
<div class="a" style="left:534px;top:503px;width:142px;height:22px;background:#fff;border-top:1px solid #808080;border-left:1px solid #808080;border-right:1px solid #fff;border-bottom:1px solid #fff;box-shadow:inset 1px 1px 0 #404040,inset -1px -1px 0 #d4d0c8"></div>
<div class="t" style="left:537px;top:506px;font-size:14px;line-height:16px;-webkit-text-stroke:0;transform:scaleX(0.9329);transform-origin:0 0;">UnitEID</div>
<div class="a" style="left:778px;top:477px;width:142px;height:22px;background:#fff;border-top:1px solid #808080;border-left:1px solid #808080;border-right:1px solid #fff;border-bottom:1px solid #fff;box-shadow:inset 1px 1px 0 #404040,inset -1px -1px 0 #d4d0c8"></div>
<div class="t" style="left:781px;top:480px;font-size:14px;line-height:16px;-webkit-text-stroke:0;transform:scaleX(0.9223);transform-origin:0 0;">TEXT</div>
<div class="a" style="left:778px;top:503px;width:142px;height:22px;background:#fff;border-top:1px solid #808080;border-left:1px solid #808080;border-right:1px solid #fff;border-bottom:1px solid #fff;box-shadow:inset 1px 1px 0 #404040,inset -1px -1px 0 #d4d0c8"></div>
<div class="t" style="left:781px;top:506px;font-size:14px;line-height:16px;-webkit-text-stroke:0;transform:scaleX(0.9223);transform-origin:0 0;">TEXT</div>
<div class="a" style="left:1022px;top:477px;width:142px;height:22px;background:#fff;border-top:1px solid #808080;border-left:1px solid #808080;border-right:1px solid #fff;border-bottom:1px solid #fff;box-shadow:inset 1px 1px 0 #404040,inset -1px -1px 0 #d4d0c8"></div>
<div class="t" style="left:1025px;top:480px;font-size:14px;line-height:16px;-webkit-text-stroke:0;transform:scaleX(0.9634);transform-origin:0 0;">null</div>
<div class="a" style="left:1022px;top:503px;width:142px;height:22px;background:#fff;border-top:1px solid #808080;border-left:1px solid #808080;border-right:1px solid #fff;border-bottom:1px solid #fff;box-shadow:inset 1px 1px 0 #404040,inset -1px -1px 0 #d4d0c8"></div>
<div class="t" style="left:1025px;top:506px;font-size:14px;line-height:16px;-webkit-text-stroke:0;transform:scaleX(0.9634);transform-origin:0 0;">null</div>
<div class="a" style="left:439px;top:529px;width:69px;height:24px;background:#d4d0c8;border-top:1px solid #fff;border-left:1px solid #fff;border-right:1px solid #404040;border-bottom:1px solid #404040;box-shadow:inset -1px -1px 0 #808080"></div>
<div class="t" style="left:456px;top:535px;transform:scaleX(0.9051);transform-origin:0 0;">Cancel</div>
<div class="a" style="left:518px;top:529px;width:69px;height:24px;background:#d4d0c8;border-top:1px solid #fff;border-left:1px solid #fff;border-right:1px solid #404040;border-bottom:1px solid #404040;box-shadow:inset -1px -1px 0 #808080"></div>
<div class="t" style="left:532px;top:535px;transform:scaleX(0.9339);transform-origin:0 0;">Change</div>
<svg style="left:0;top:0" width="1279" height="996"><path d="M1041.8 497.5 C1040.0 496.9 1033.8 495.3 1031.0 494.2 C1028.2 493.1 1027.8 491.8 1025.0 491.0 C1022.2 490.2 1018.0 489.6 1014.0 489.3 C1010.0 489.1 1005.0 489.1 1001.0 489.5 C997.0 489.9 992.8 490.7 990.0 491.5 C987.2 492.3 986.1 493.2 984.5 494.5 C982.9 495.8 981.4 497.6 980.5 499.5 C979.6 501.4 979.1 503.9 978.9 506.0 C978.7 508.1 979.3 510.3 979.5 512.0 C979.7 513.7 979.5 514.2 980.3 516.3 C981.0 518.4 982.0 521.9 984.0 524.7 C986.0 527.5 990.8 531.3 992.5 533.2 C994.2 535.1 993.3 535.3 994.4 536.0 C995.5 536.7 997.6 536.7 999.0 537.4 C1000.4 538.1 1001.4 539.5 1002.8 540.2 C1004.2 540.9 1005.5 540.6 1007.5 541.6 C1009.5 542.6 1011.2 544.9 1015.0 546.3 C1018.8 547.7 1022.8 548.9 1030.0 550.0 C1037.2 551.1 1050.7 552.6 1058.2 552.9 C1065.7 553.1 1069.7 552.0 1075.0 551.5 C1080.3 551.0 1086.0 550.1 1090.0 549.6 C1094.0 549.1 1094.5 548.2 1098.8 548.2 C1103.1 548.2 1109.7 549.8 1115.6 549.6 C1121.5 549.4 1130.2 547.5 1134.4 546.8 C1138.6 546.1 1138.8 546.1 1141.0 545.4 C1143.2 544.7 1146.2 543.8 1147.5 542.5 C1148.8 541.2 1146.8 538.9 1148.5 537.4 C1150.2 535.9 1155.2 534.6 1157.9 533.2 C1160.6 531.8 1162.4 530.1 1164.4 529.0 C1166.4 527.9 1168.3 527.6 1170.0 526.6 C1171.7 525.6 1173.4 524.3 1174.7 522.8 C1176.0 521.3 1178.4 520.0 1177.6 517.7 C1176.8 515.4 1171.9 510.9 1170.0 509.2 C1168.1 507.5 1167.8 508.7 1166.3 507.8 C1164.8 506.9 1164.1 505.1 1160.7 503.6 C1157.3 502.1 1152.0 500.2 1145.7 498.9 C1139.5 497.6 1129.5 496.7 1123.2 495.6 C1116.9 494.5 1113.3 493.2 1108.1 492.4 C1102.9 491.6 1100.2 491.4 1092.2 491.0 C1084.2 490.6 1071.0 490.2 1060.0 490.0 C1049.0 489.8 1034.6 489.1 1026.3 489.5 C1018.0 489.9 1015.8 491.1 1010.0 492.5 C1004.2 493.9 994.7 497.1 991.6 498.0" fill="none" stroke="#ff0000" stroke-width="2.3" stroke-linejoin="round" stroke-linecap="round"/></svg>
<div class="a" style="left:431px;top:574px;width:836px;height:266px;border:1px solid #808080;box-shadow:inset 1px 1px 0 #fff,1px 1px 0 #fff"></div>
<div class="a" style="left:437px;top:574px;width:67px;height:2px;background:#d4d0c8"></div>
<div class="t" style="left:438px;top:569px;transform:scaleX(0.9389);transform-origin:0 0;">Columns (10)</div>
<div class="a" style="left:438px;top:585px;width:823px;height:203px;background:#fff;border-top:1px solid #808080;border-left:1px solid #808080;border-right:1px solid #fff;border-bottom:1px solid #fff;box-shadow:inset 1px 1px 0 #404040,inset -1px -1px 0 #d4d0c8"></div>
<div class="a" style="left:440px;top:587px;width:139px;height:19px;background:#d4d0c8;border-top:1px solid #fff;border-left:1px solid #fff;border-right:1px solid #404040;border-bottom:1px solid #404040;box-shadow:inset -1px -1px 0 #808080"></div>
<div class="t" style="left:445px;top:591px;transform:scaleX(0.9236);transform-origin:0 0;">Column ID</div>
<div class="a" style="left:579px;top:587px;width:117px;height:19px;background:#d4d0c8;border-top:1px solid #fff;border-left:1px solid #fff;border-right:1px solid #404040;border-bottom:1px solid #404040;box-shadow:inset -1px -1px 0 #808080"></div>
<div class="t" style="left:584px;top:591px;transform:scaleX(0.9201);transform-origin:0 0;">Name</div>
<div class="a" style="left:696px;top:587px;width:114px;height:19px;background:#d4d0c8;border-top:1px solid #fff;border-left:1px solid #fff;border-right:1px solid #404040;border-bottom:1px solid #404040;box-shadow:inset -1px -1px 0 #808080"></div>
<div class="t" style="left:701px;top:591px;transform:scaleX(0.9640);transform-origin:0 0;">Type</div>
<div class="a" style="left:810px;top:587px;width:128px;height:19px;background:#d4d0c8;border-top:1px solid #fff;border-left:1px solid #fff;border-right:1px solid #404040;border-bottom:1px solid #404040;box-shadow:inset -1px -1px 0 #808080"></div>
<div class="t" style="left:815px;top:591px;transform:scaleX(0.9457);transform-origin:0 0;">Not Null</div>
<div class="a" style="left:938px;top:587px;width:154px;height:19px;background:#d4d0c8;border-top:1px solid #fff;border-left:1px solid #fff;border-right:1px solid #404040;border-bottom:1px solid #404040;box-shadow:inset -1px -1px 0 #808080"></div>
<div class="t" style="left:943px;top:591px;transform:scaleX(0.9657);transform-origin:0 0;">Default Value</div>
<div class="a" style="left:1092px;top:587px;width:147px;height:19px;background:#d4d0c8;border-top:1px solid #fff;border-left:1px solid #fff;border-right:1px solid #404040;border-bottom:1px solid #404040;box-shadow:inset -1px -1px 0 #808080"></div>
<div class="t" style="left:1097px;top:591px;transform:scaleX(0.9181);transform-origin:0 0;">Primary Key</div>
<div class="a" style="left:1239px;top:587px;width:20px;height:19px;background:#d4d0c8;border-top:1px solid #fff;border-left:1px solid #fff;border-right:1px solid #404040;border-bottom:1px solid #404040;box-shadow:inset -1px -1px 0 #808080"></div>
<svg style="left:1244px;top:593px" width="11" height="9" viewBox="0 0 11 9"><path d="M0.5 8V0.5H9.5V6M0.5 3.5H9.5M4.5 0.5V3.5M0.5 8.5H5" fill="none" stroke="#000" stroke-width="1"/><path d="M5.5 5.5H10.5L8 8.5Z" fill="#000"/></svg>
<div class="t" style="left:442px;top:610px;transform:scaleX(0.9796);transform-origin:0 0;">0</div>
<div class="t" style="left:580px;top:610px;transform:scaleX(0.9171);transform-origin:0 0;">pKey</div>
<div class="t" style="left:697px;top:610px;transform:scaleX(0.8588);transform-origin:0 0;">INTEGER</div>
<div class="t" style="left:811px;top:610px;transform:scaleX(0.9796);transform-origin:0 0;">0</div>
<div class="t" style="left:939px;top:610px;transform:scaleX(0.9343);transform-origin:0 0;">null</div>
<div class="t" style="left:1094px;top:610px;transform:scaleX(0.9796);transform-origin:0 0;">1</div>
<div class="t" style="left:442px;top:628px;transform:scaleX(0.9796);transform-origin:0 0;">1</div>
<div class="t" style="left:580px;top:628px;transform:scaleX(0.9380);transform-origin:0 0;">filename</div>
<div class="t" style="left:697px;top:628px;transform:scaleX(0.8533);transform-origin:0 0;">TEXT</div>
<div class="t" style="left:811px;top:628px;transform:scaleX(0.9796);transform-origin:0 0;">0</div>
<div class="t" style="left:939px;top:628px;transform:scaleX(0.9343);transform-origin:0 0;">null</div>
<div class="t" style="left:1094px;top:628px;transform:scaleX(0.9796);transform-origin:0 0;">0</div>
<div class="t" style="left:442px;top:646px;transform:scaleX(0.9796);transform-origin:0 0;">2</div>
<div class="t" style="left:580px;top:646px;transform:scaleX(1.0098);transform-origin:0 0;">type</div>
<div class="t" style="left:697px;top:646px;transform:scaleX(0.8588);transform-origin:0 0;">INTEGER</div>
<div class="t" style="left:811px;top:646px;transform:scaleX(0.9796);transform-origin:0 0;">0</div>
<div class="t" style="left:939px;top:646px;transform:scaleX(0.9343);transform-origin:0 0;">null</div>
<div class="t" style="left:1094px;top:646px;transform:scaleX(0.9796);transform-origin:0 0;">0</div>
<div class="t" style="left:442px;top:664px;transform:scaleX(0.9796);transform-origin:0 0;">3</div>
<div class="t" style="left:580px;top:664px;transform:scaleX(1.0511);transform-origin:0 0;">title</div>
<div class="t" style="left:697px;top:664px;transform:scaleX(0.8533);transform-origin:0 0;">TEXT</div>
<div class="t" style="left:811px;top:664px;transform:scaleX(0.9796);transform-origin:0 0;">0</div>
<div class="t" style="left:939px;top:664px;transform:scaleX(0.9343);transform-origin:0 0;">null</div>
<div class="t" style="left:1094px;top:664px;transform:scaleX(0.9796);transform-origin:0 0;">0</div>
<div class="t" style="left:442px;top:682px;transform:scaleX(0.9796);transform-origin:0 0;">4</div>
<div class="t" style="left:580px;top:682px;transform:scaleX(0.9461);transform-origin:0 0;">curriculum</div>
<div class="t" style="left:697px;top:682px;transform:scaleX(0.8533);transform-origin:0 0;">TEXT</div>
<div class="t" style="left:811px;top:682px;transform:scaleX(0.9796);transform-origin:0 0;">0</div>
<div class="t" style="left:939px;top:682px;transform:scaleX(0.9343);transform-origin:0 0;">null</div>
<div class="t" style="left:1094px;top:682px;transform:scaleX(0.9796);transform-origin:0 0;">0</div>
<div class="t" style="left:442px;top:700px;transform:scaleX(0.9796);transform-origin:0 0;">5</div>
<div class="t" style="left:580px;top:700px;transform:scaleX(0.9643);transform-origin:0 0;">thumbnail</div>
<div class="t" style="left:697px;top:700px;transform:scaleX(0.8175);transform-origin:0 0;">BLOB</div>
<div class="t" style="left:811px;top:700px;transform:scaleX(0.9796);transform-origin:0 0;">0</div>
<div class="t" style="left:939px;top:700px;transform:scaleX(0.9343);transform-origin:0 0;">null</div>
<div class="t" style="left:1094px;top:700px;transform:scaleX(0.9796);transform-origin:0 0;">0</div>
<div class="a" style="left:440px;top:715px;width:819px;height:18px;background:#d4d0c8"></div>
<div class="t" style="left:442px;top:718px;font-weight:bold;">6</div>
<div class="t" style="left:580px;top:718px;font-weight:bold;transform:scaleX(1.0822);transform-origin:0 0;">UnitEID</div>
<div class="t" style="left:697px;top:718px;font-weight:bold;transform:scaleX(0.9244);transform-origin:0 0;">TEXT</div>
<div class="t" style="left:811px;top:718px;font-weight:bold;">0</div>
<div class="t" style="left:939px;top:718px;font-weight:bold;transform:scaleX(1.0735);transform-origin:0 0;">null</div>
<div class="t" style="left:1094px;top:718px;font-weight:bold;">0</div>
<div class="t" style="left:442px;top:736px;transform:scaleX(0.9796);transform-origin:0 0;">7</div>
<div class="t" style="left:580px;top:736px;transform:scaleX(1.0184);transform-origin:0 0;">part_no</div>
<div class="t" style="left:697px;top:736px;transform:scaleX(0.8533);transform-origin:0 0;">TEXT</div>
<div class="t" style="left:811px;top:736px;transform:scaleX(0.9796);transform-origin:0 0;">0</div>
<div class="t" style="left:939px;top:736px;transform:scaleX(0.9343);transform-origin:0 0;">null</div>
<div class="t" style="left:1094px;top:736px;transform:scaleX(0.9796);transform-origin:0 0;">0</div>
<div class="t" style="left:442px;top:754px;transform:scaleX(0.9796);transform-origin:0 0;">8</div>
<div class="t" style="left:580px;top:754px;transform:scaleX(0.9732);transform-origin:0 0;">lst_id</div>
<div class="t" style="left:697px;top:754px;transform:scaleX(0.8588);transform-origin:0 0;">INTEGER</div>
<div class="t" style="left:811px;top:754px;transform:scaleX(0.9796);transform-origin:0 0;">0</div>
<div class="t" style="left:939px;top:754px;transform:scaleX(0.9343);transform-origin:0 0;">null</div>
<div class="t" style="left:1094px;top:754px;transform:scaleX(0.9796);transform-origin:0 0;">0</div>
<div class="t" style="left:442px;top:772px;transform:scaleX(0.9796);transform-origin:0 0;">9</div>
<div class="t" style="left:580px;top:772px;transform:scaleX(0.9810);transform-origin:0 0;">ver_no</div>
<div class="t" style="left:697px;top:772px;transform:scaleX(0.8533);transform-origin:0 0;">TEXT</div>
<div class="t" style="left:811px;top:772px;transform:scaleX(0.9796);transform-origin:0 0;">0</div>
<div class="t" style="left:939px;top:772px;transform:scaleX(0.9343);transform-origin:0 0;">null</div>
<div class="t" style="left:1094px;top:772px;transform:scaleX(0.9796);transform-origin:0 0;">0</div>
<div class="t" style="left:439px;top:791px;transform:scaleX(0.9201);transform-origin:0 0;">Name</div>
<div class="t" style="left:594px;top:791px;transform:scaleX(0.9640);transform-origin:0 0;">Type</div>
<div class="t" style="left:695px;top:791px;transform:scaleX(0.9457);transform-origin:0 0;">Not Null</div>
<div class="t" style="left:743px;top:791px;transform:scaleX(0.9753);transform-origin:0 0;">Default</div>
<div class="a" style="left:434px;top:806px;width:142px;height:29px;background:#fff;border-top:1px solid #808080;border-left:1px solid #808080;border-right:1px solid #fff;border-bottom:1px solid #fff;box-shadow:inset 1px 1px 0 #404040,inset -1px -1px 0 #d4d0c8"></div>
<div class="a" style="left:580px;top:808px;width:90px;height:25px;background:#fff;border-top:1px solid #808080;border-left:1px solid #808080;border-right:1px solid #fff;border-bottom:1px solid #fff;box-shadow:inset 1px 1px 0 #404040,inset -1px -1px 0 #d4d0c8"></div>
<div class="a" style="left:652px;top:810px;width:16px;height:21px;background:#d4d0c8;border-top:1px solid #d4d0c8;border-left:1px solid #d4d0c8;border-right:1px solid #404040;border-bottom:1px solid #404040;box-shadow:inset 1px 1px 0 #fff,inset -1px -1px 0 #808080"></div>
<div class="a" style="left:656px;top:818px;width:7px;height:1px;background:#000"></div>
<div class="a" style="left:657px;top:819px;width:5px;height:1px;background:#000"></div>
<div class="a" style="left:658px;top:820px;width:3px;height:1px;background:#000"></div>
<div class="a" style="left:659px;top:821px;width:1px;height:1px;background:#000"></div>
<div class="a" style="left:682px;top:814px;width:13px;height:13px;background:#fff;border-top:1px solid #808080;border-left:1px solid #808080;border-right:1px solid #fff;border-bottom:1px solid #fff;box-shadow:inset 1px 1px 0 #404040,inset -1px -1px 0 #d4d0c8"></div>
<div class="a" style="left:724px;top:806px;width:82px;height:29px;background:#fff;border-top:1px solid #808080;border-left:1px solid #808080;border-right:1px solid #fff;border-bottom:1px solid #fff;box-shadow:inset 1px 1px 0 #404040,inset -1px -1px 0 #d4d0c8"></div>
<div class="a" style="left:811px;top:807px;width:70px;height:26px;background:#d4d0c8;border-top:1px solid #fff;border-left:1px solid #fff;border-right:1px solid #404040;border-bottom:1px solid #404040;box-shadow:inset -1px -1px 0 #808080"></div>
<div class="t" style="left:816px;top:813px;transform:scaleX(0.9084);transform-origin:0 0;">Add Column</div>
<div class="a" style="left:-1px;top:976px;width:97px;height:20px;border-top:1px solid #808080;border-left:1px solid #808080;border-right:1px solid #fff;border-bottom:1px solid #fff"></div>
<div class="a" style="left:98px;top:976px;width:75px;height:20px;border-top:1px solid #808080;border-left:1px solid #808080;border-right:1px solid #fff;border-bottom:1px solid #fff"></div>
<div class="a" style="left:174px;top:976px;width:48px;height:20px;border-top:1px solid #808080;border-left:1px solid #808080;border-right:1px solid #fff;border-bottom:1px solid #fff"></div>
<div class="a" style="left:223px;top:976px;width:74px;height:20px;border-top:1px solid #808080;border-left:1px solid #808080;border-right:1px solid #fff;border-bottom:1px solid #fff"></div>
<div class="a" style="left:298px;top:976px;width:957px;height:20px;border-top:1px solid #808080;border-left:1px solid #808080;border-right:1px solid #fff;border-bottom:1px solid #fff"></div>
<div class="a" style="left:1256px;top:976px;width:21px;height:20px;border-top:1px solid #808080;border-left:1px solid #808080;border-right:1px solid #fff;border-bottom:1px solid #fff"></div>
<div class="t" style="left:10px;top:980px;font-weight:bold;font-size:11.5px;transform:scaleX(1.0075);transform-origin:0 0;">SQLite 3.8.7.4</div>
<div class="t" style="left:108px;top:980px;transform:scaleX(0.9420);transform-origin:0 0;">Gecko 36.0</div>
<div class="t" style="left:186px;top:980px;color:#808080;transform:scaleX(0.9808);transform-origin:0 0;">0.8.3</div>
<div class="t" style="left:235px;top:980px;font-weight:bold;font-size:11.5px;transform:scaleX(0.9608);transform-origin:0 0;">Exclusive</div>
<div class="t" style="left:309px;top:980px;transform:scaleX(0.9942);transform-origin:0 0;">Number of files in selected directory: 7</div>
</body></html>
